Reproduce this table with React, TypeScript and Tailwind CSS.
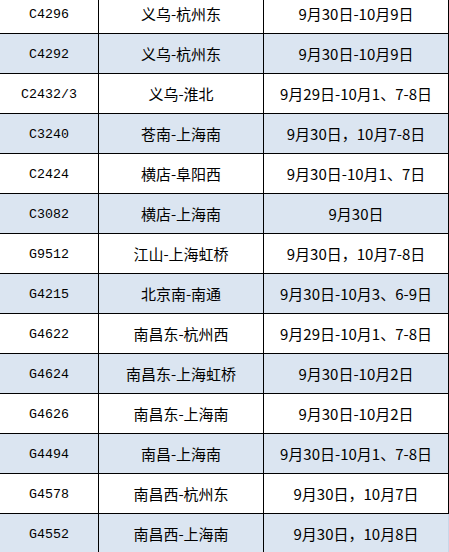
import React from 'react';

const rows: [string, string, string][] = [
  ['C4296', '义乌-杭州东', '9月30日-10月9日'],
  ['C4292', '义乌-杭州东', '9月30日-10月9日'],
  ['C2432/3', '义乌-淮北', '9月29日-10月1、7-8日'],
  ['C3240', '苍南-上海南', '9月30日，10月7-8日'],
  ['C2424', '横店-阜阳西', '9月30日-10月1、7日'],
  ['C3082', '横店-上海南', '9月30日'],
  ['G9512', '江山-上海虹桥', '9月30日，10月7-8日'],
  ['G4215', '北京南-南通', '9月30日-10月3、6-9日'],
  ['G4622', '南昌东-杭州西', '9月29日-10月1、7-8日'],
  ['G4624', '南昌东-上海虹桥', '9月30日-10月2日'],
  ['G4626', '南昌东-上海南', '9月30日-10月2日'],
  ['G4494', '南昌-上海南', '9月30日-10月1、7-8日'],
  ['G4578', '南昌西-杭州东', '9月30日，10月7日'],
  ['G4552', '南昌西-上海南', '9月30日，10月8日'],
];

export default function App() {
  return (
    <div className="w-[449px] h-[552px] overflow-hidden bg-white text-black">
      <div className="-mt-[6px]">
        {rows.map(([train, route, dates], i) => (
          <div
            key={train}
            className={`grid grid-cols-[99px_165px_185px] h-[40px] border-b border-black ${
              i % 2 === 1 ? 'bg-[#dbe5f1]' : 'bg-white'
            }`}
          >
            <div className="flex items-center justify-center border-r border-black font-['Liberation_Mono',monospace] text-[13.3px] leading-none pt-[3px]">
              {train}
            </div>
            <div className="flex items-center justify-center border-r border-black font-['Noto_Sans_CJK_SC',sans-serif] text-[15px] leading-none">
              {route}
            </div>
            <div
              className={`flex items-center justify-center border-r font-['Noto_Sans_CJK_SC',sans-serif] text-[15px] leading-none ${
                i === rows.length - 1 ? 'border-[#c9d6e8]' : 'border-black'
              }`}
            >
              {dates}
            </div>
          </div>
        ))}
      </div>
    </div>
  );
}
